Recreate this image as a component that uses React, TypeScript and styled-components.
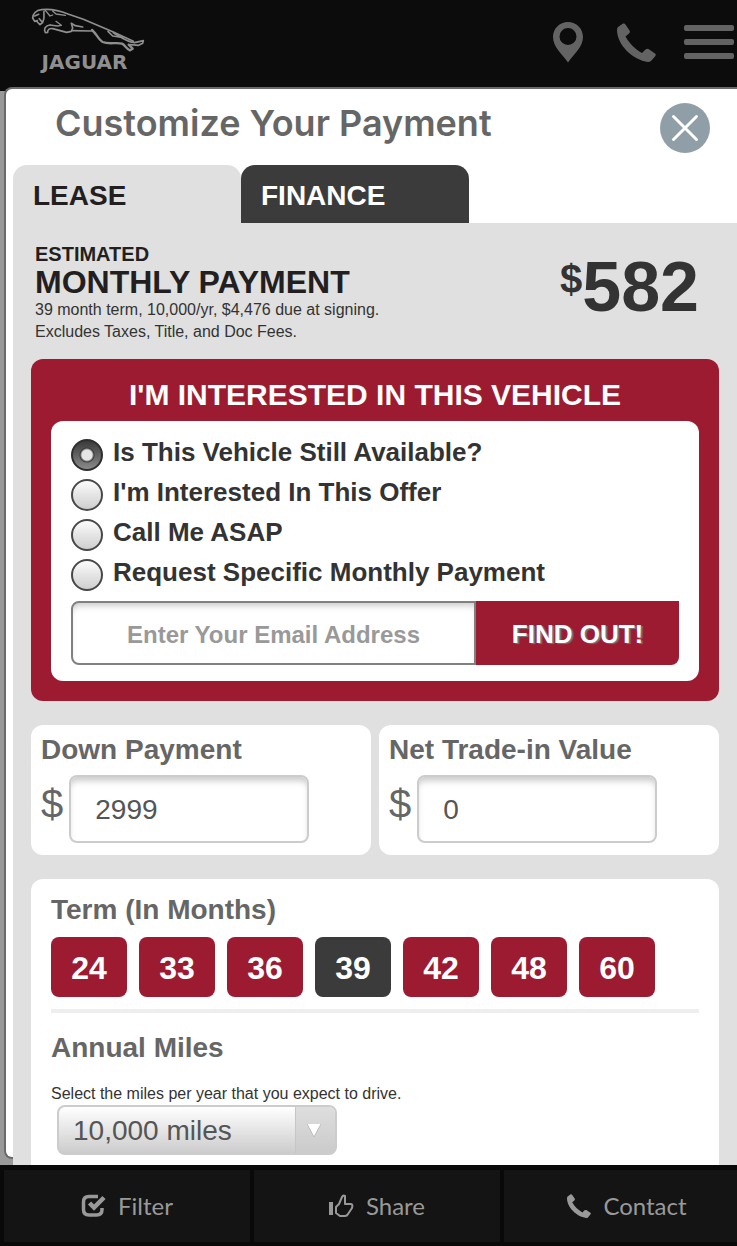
import React, { useState } from "react";
import styled, { createGlobalStyle } from "styled-components";

const sans = `"Liberation Sans", Arial, Helvetica, sans-serif`;
const brand = "#9d1b31";

const Global = createGlobalStyle`
  * { box-sizing: border-box; }
  body { margin: 0; background: #999; font-family: ${sans}; color: #333; }
  button, input, select { font-family: inherit; margin: 0; }
  h1, h2, h3, p, fieldset { margin: 0; padding: 0; border: 0; }
`;

const Page = styled.div`
  min-height: 100vh;
  display: flex;
  flex-direction: column;
  overflow-x: hidden;
`;

const Header = styled.header`
  height: 91px;
  flex: none;
  padding: 8px 3px 0 20px;
  background: #0c0c0c;
  display: flex;
  justify-content: space-between;
`;

const Logo = styled.a`
  display: flex;
  flex-direction: column;
  align-items: center;
  width: 129px;
  color: #8f8f8f;
  text-decoration: none;
`;

const Wordmark = styled.span`
  font: bold 20px/16px "DejaVu Sans", Verdana, sans-serif;
`;

const HeaderNav = styled.nav`
  display: flex;
  align-items: center;
  height: 68px;
`;

const IconButton = styled.button<{ $gap?: number }>`
  display: block;
  padding: 0;
  border: 0;
  background: none;
  color: #636363;
  line-height: 0;
  cursor: pointer;
  margin-left: ${(p) => p.$gap ?? 0}px;
`;

const Main = styled.main`
  flex: 1;
  display: flex;
  flex-direction: column;
  padding-left: 4px;
`;

const Modal = styled.section`
  flex: 1;
  position: relative;
  margin: -4px 0 6px;
  padding-left: 7px;
  background: #fff;
  border: 2px solid #6a6a6a;
  border-right: 0;
  border-radius: 8px 0 0 8px;
  display: flex;
  flex-direction: column;
`;

const ModalHead = styled.div`
  display: flex;
  justify-content: space-between;
  align-items: flex-start;
  padding: 14px 27px 0 42px;
  height: 76px;
`;

const Title = styled.h1`
  font: 600 36px/40px Inter, sans-serif;
  color: #666;
`;

const Tabs = styled.div`
  display: flex;
`;

const Tab = styled.button<{ $active?: boolean }>`
  width: 228px;
  height: 58px;
  padding: 4px 20px 0;
  border: 0;
  border-radius: 14px 14px 0 0;
  text-align: left;
  font-size: 28px;
  font-weight: bold;
  background: ${(p) => (p.$active ? "#e0e0e0" : "#3b3b3b")};
  color: ${(p) => (p.$active ? "#231f20" : "#fff")};
`;

const Panel = styled.div`
  flex: 1;
  margin-bottom: -8px;
  padding: 20px 18px 0;
  background: #e0e0e0;
  display: flex;
  flex-direction: column;
`;

const Summary = styled.div`
  display: flex;
  justify-content: space-between;
  align-items: flex-start;
  padding: 0 20px 0 4px;
  height: 116px;
`;

const Estimate = styled.h2`
  font-size: 32px;
  line-height: 34px;
  color: #231f20;
`;

const Kicker = styled.span`
  display: block;
  font-size: 20px;
  line-height: 22px;
`;

const Small = styled.p`
  font-size: 16px;
  line-height: 22px;
  color: #333;
`;

const Price = styled.div`
  display: flex;
  align-items: flex-start;
  font-weight: bold;
  font-size: 70px;
  line-height: 88px;
`;

const PriceSign = styled.span`
  font-size: 40px;
  line-height: 72px;
`;

const Lead = styled.form`
  padding: 16px 20px 20px;
  border-radius: 12px;
  background: ${brand};
`;

const LeadTitle = styled.h2`
  font-size: 30px;
  line-height: 40px;
  padding-bottom: 6px;
  text-align: center;
  color: #fff;
`;

const LeadBody = styled.div`
  padding: 14px 20px 16px;
  border-radius: 12px;
  background: #fff;
`;

const Choice = styled.label`
  display: flex;
  align-items: flex-end;
  gap: 10px;
  height: 40px;
  padding-bottom: 4px;
  font-size: 26px;
  line-height: 38px;
  font-weight: bold;
`;

const Radio = styled.input`
  appearance: none;
  flex: none;
  width: 32px;
  height: 32px;
  margin: 0;
  border: 2px solid #484848;
  border-radius: 50%;
  background: linear-gradient(#fbfbfb, #cfcfcf);
  &:checked {
    border-color: #2e2e2e;
    background: radial-gradient(circle at 50% 50%, #e6e6e6 5px, #3a3a3a 7px, transparent 8px),
      linear-gradient(#3a3a3a, #8a8a8a);
  }
`;

const EmailRow = styled.div`
  display: flex;
  height: 64px;
  margin-top: 6px;
`;

const Email = styled.input`
  flex: 2;
  min-width: 0;
  padding: 4px 0 0;
  border: 2px solid #808080;
  border-radius: 8px 0 0 8px;
  box-shadow: inset 0 6px 6px -3px #ccc;
  text-align: center;
  font-size: 24px;
  font-weight: bold;
  color: #333;
  &::placeholder { color: #999; opacity: 1; }
`;

const Submit = styled.button`
  flex: 1;
  min-width: 203px;
  padding: 2px 0 0;
  border: 0;
  border-radius: 0 0 8px 0;
  background: ${brand};
  color: #fff;
  font-size: 26px;
  font-weight: bold;
  text-shadow: 2px 1px 1px #777;
`;

const Fields = styled.div`
  display: grid;
  grid-template-columns: 1fr 1fr;
  gap: 8px;
  margin: 24px 0;
`;

const Card = styled.div`
  padding: 8px 10px 12px;
  border-radius: 12px;
  background: #fff;
`;

const FieldTitle = styled.label`
  display: block;
  font-size: 28px;
  line-height: 34px;
  padding-bottom: 8px;
  font-weight: bold;
  color: #666;
`;

const Money = styled.div`
  display: flex;
  gap: 6px;
  color: #666;
  font-size: 40px;
  line-height: 58px;
`;

const Amount = styled.input`
  width: 240px;
  height: 68px;
  padding: 2px 24px 0;
  border: 2px solid #ccc;
  border-radius: 8px;
  box-shadow: inset 0 6px 6px -2px #ccc;
  font-size: 28px;
  color: #555;
`;

const Options = styled.section`
  flex: 1;
  padding: 14px 20px 10px;
  border-radius: 12px 12px 0 0;
  background: #fff;
`;

const OptionTitle = styled.h3`
  font-size: 28px;
  line-height: 34px;
  color: #666;
`;

const Terms = styled.div`
  display: flex;
  gap: 12px;
  padding: 10px 0 12px;
`;

const Term = styled.button<{ $active: boolean }>`
  width: 76px;
  height: 60px;
  padding: 2px 0 0;
  border: 0;
  border-radius: 8px;
  background: ${(p) => (p.$active ? "#3b3b3b" : brand)};
  color: #fff;
  font-size: 32px;
  font-weight: bold;
`;

const Rule = styled.hr`
  height: 4px;
  margin: 0 0 18px;
  border: 0;
  background: #eee;
`;

const MilesLabel = styled.label`
  display: block;
  padding-top: 18px;
  font-size: 16px;
  line-height: 22px;
`;

const SelectWrap = styled.div`
  display: grid;
  grid-template-columns: 1fr 40px;
  width: 280px;
  height: 50px;
  margin-left: 6px;
  border: 2px solid #ccc;
  border-radius: 8px;
  background: linear-gradient(#fff, #ccc);
  color: #fff;
`;

const Select = styled.select`
  grid-area: 1 / 1 / 2 / 3;
  appearance: none;
  border: 0;
  padding: 0 14px;
  background: none;
  font-size: 28px;
  color: #555;
`;

const Arrow = styled.span`
  grid-area: 1 / 2 / 2 / 3;
  display: flex;
  align-items: center;
  justify-content: center;
  padding-right: 3px;
  border-left: 1px solid #c6c6c6;
  border-radius: 0 6px 6px 0;
  background: linear-gradient(#dedede, #cbcbcb);
  pointer-events: none;
`;

const Footer = styled.footer`
  flex: none;
  display: grid;
  grid-template-columns: repeat(3, 1fr);
  gap: 4px;
  height: 81px;
  margin-right: -13px;
  padding: 5px 0 4px 4px;
  background: #090909;
`;

const FooterLink = styled.a`
  display: flex;
  align-items: center;
  justify-content: center;
  gap: 12px;
  background: #141414;
  color: #999;
  font: 24px/32px Lato, sans-serif;
  text-decoration: none;
`;

const Cat = () => (
  <svg width="129" height="46" viewBox="60 24 387 138" fill="none" stroke="currentColor" strokeWidth="4" strokeLinecap="round" strokeLinejoin="round">
    <path d="M98 54C98 42 108 30 124 29C150 26 180 32 204 42L250 58L340 96L400 124" strokeWidth="5" />
    <path d="M98 54L104 64L112 62M104 48L116 43M112 66L120 74L128 68L118 56M132 34C130 44 136 52 128 66" strokeWidth="5" />
    <path d="M136 31L150 48L158 45M158 33L168 42L196 46M168 64L184 76L172 78L150 75" />
    <path d="M150 75C136 76 130 88 136 98L143 97C142 88 150 84 158 86L200 97L214 94L218 84L214 70L226 77L248 81" strokeWidth="5" />
    <path d="M216 92L274 93" strokeWidth="5" />
    <path d="M276 90C290 102 296 120 308 126C326 134 350 126 366 131C376 136 380 148 390 151L398 146L386 134" strokeWidth="7" />
    <path d="M340 98C360 110 384 128 404 128L430 122L428 130L416 136L390 134" strokeWidth="5" />
    <path d="M324 94L338 108L368 112" strokeWidth="5" />
  </svg>
);

const Pin = () => (
  <svg width="30" height="41" viewBox="0 0 30 41" fill="currentColor">
    <path fillRule="evenodd" d="M15 0C6.500 0 0 6.700 0 15C0 25 9 32 15 40.500C21 32 30 25 30 15C30 6.700 23.500 0 15 0ZM15 6A8.500 8.500 0 1 1 15 23A8.500 8.500 0 1 1 15 6Z" />
  </svg>
);

const Phone = ({ size }: { size: number }) => (
  <svg width={size} height={size} viewBox="0 0 39 39" fill="currentColor">
    <path d="M1 4L6 0.500Q7.500 0 8.500 1.500L12.500 7.500Q13.500 9 12 10.500L8.500 13.500C12 20 18 26 25 30L28.500 26.500Q30 25.500 31.500 26L38 30.500Q39.500 31.500 38 33.500L34 38Q33 39 31 39C16 37 0 22 0 7Q0 5 1 4Z" />
  </svg>
);

const Menu = () => (
  <svg width="50" height="34" viewBox="0 0 50 34" fill="currentColor">
    <rect width="50" height="6" rx="2" />
    <rect y="14" width="50" height="6" rx="2" />
    <rect y="28" width="50" height="6" rx="2" />
  </svg>
);

const Close = () => (
  <svg width="50" height="50" viewBox="0 0 50 50">
    <circle cx="25" cy="25" r="25" fill="#909ea7" />
    <path d="M13.500 13.500L36.500 36.500M36.500 13.500L13.500 36.500" stroke="#fff" strokeWidth="3" strokeLinecap="round" />
  </svg>
);

const Check = () => (
  <svg width="25" height="24" viewBox="0 0 25 24" fill="none" stroke="currentColor">
    <path d="M17 2.500H8Q2.500 2.500 2.500 8V15.500Q2.500 21 8 21H15.500Q21 21 21 15.500V14" strokeWidth="3.500" />
    <path d="M8.500 9L13 13.500L23 3.500" strokeWidth="4.500" />
  </svg>
);

const Thumb = () => (
  <svg width="25" height="24" viewBox="0 0 25 24" fill="none" stroke="currentColor" strokeWidth="2" strokeLinejoin="round">
    <path d="M2 8V21" strokeWidth="4" />
    <path d="M7 13L10 10L13 3Q14 1 16 2V10H22Q24 10 23 14L19 20Q18 22 16 22H11L7 19Z" />
  </svg>
);

const terms = [24, 33, 36, 39, 42, 48, 60];
const choices = [
  "Is This Vehicle Still Available?",
  "I'm Interested In This Offer",
  "Call Me ASAP",
  "Request Specific Monthly Payment",
];

export default function App() {
  const [term, setTerm] = useState(39);
  return (
    <>
      <Global />
      <Page>
        <Header>
          <Logo href="#home">
            <Cat />
            <Wordmark>JAGUAR</Wordmark>
          </Logo>
          <HeaderNav>
            <IconButton aria-label="Locations"><Pin /></IconButton>
            <IconButton aria-label="Call" $gap={34}><Phone size={39} /></IconButton>
            <IconButton aria-label="Menu" $gap={28}><Menu /></IconButton>
          </HeaderNav>
        </Header>
        <Main>
          <Modal>
            <ModalHead>
              <Title>Customize Your Payment</Title>
              <IconButton aria-label="Close"><Close /></IconButton>
            </ModalHead>
            <Tabs role="tablist">
              <Tab role="tab" aria-selected="true" $active>LEASE</Tab>
              <Tab role="tab" aria-selected="false">FINANCE</Tab>
            </Tabs>
            <Panel>
              <Summary>
                <div>
                  <Estimate><Kicker>ESTIMATED</Kicker>MONTHLY PAYMENT</Estimate>
                  <Small>39 month term, 10,000/yr, $4,476 due at signing.</Small>
                  <Small>Excludes Taxes, Title, and Doc Fees.</Small>
                </div>
                <Price><PriceSign>$</PriceSign>582</Price>
              </Summary>
              <Lead onSubmit={(e) => e.preventDefault()}>
                <LeadTitle>I'M INTERESTED IN THIS VEHICLE</LeadTitle>
                <LeadBody>
                  {choices.map((text, i) => (
                    <Choice key={text}>
                      <Radio type="radio" name="request" defaultChecked={i === 0} />
                      {text}
                    </Choice>
                  ))}
                  <EmailRow>
                    <Email type="email" aria-label="Email address" placeholder="Enter Your Email Address" />
                    <Submit type="submit">FIND OUT!</Submit>
                  </EmailRow>
                </LeadBody>
              </Lead>
              <Fields>
                <Card>
                  <FieldTitle htmlFor="down">Down Payment</FieldTitle>
                  <Money>$<Amount id="down" defaultValue="2999" /></Money>
                </Card>
                <Card>
                  <FieldTitle htmlFor="trade">Net Trade-in Value</FieldTitle>
                  <Money>$<Amount id="trade" defaultValue="0" /></Money>
                </Card>
              </Fields>
              <Options>
                <OptionTitle>Term (In Months)</OptionTitle>
                <Terms>
                  {terms.map((n) => (
                    <Term key={n} $active={n === term} onClick={() => setTerm(n)}>{n}</Term>
                  ))}
                </Terms>
                <Rule />
                <OptionTitle>Annual Miles</OptionTitle>
                <MilesLabel htmlFor="miles">Select the miles per year that you expect to drive.</MilesLabel>
                <SelectWrap>
                  <Select id="miles" defaultValue="10,000 miles">
                    <option>10,000 miles</option>
                    <option>12,000 miles</option>
                    <option>15,000 miles</option>
                  </Select>
                  <Arrow>
                    <svg width="14" height="13" viewBox="0 0 14 13"><path d="M0 0H14L7 13Z" fill="#fff" /><path d="M0 0L7 13L14 0" fill="none" stroke="#bbb" /></svg>
                  </Arrow>
                </SelectWrap>
              </Options>
            </Panel>
          </Modal>
        </Main>
        <Footer>
          <FooterLink href="#filter"><Check />Filter</FooterLink>
          <FooterLink href="#share"><Thumb />Share</FooterLink>
          <FooterLink href="#contact"><Phone size={24} />Contact</FooterLink>
        </Footer>
      </Page>
    </>
  );
}
